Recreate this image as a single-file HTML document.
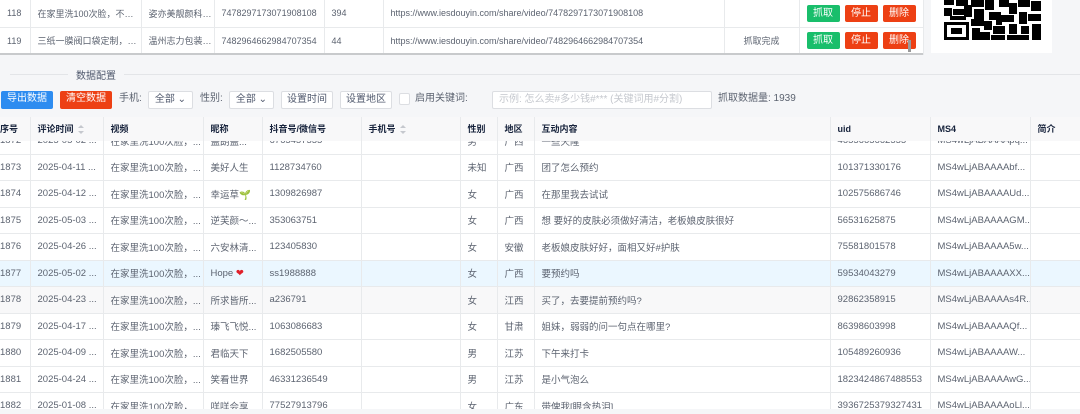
<!DOCTYPE html>
<html><head><meta charset="utf-8"><style>
*{box-sizing:border-box;margin:0;padding:0}
body{width:1080px;height:414px;overflow:hidden;background:#f5f6f8;font-family:"Liberation Sans","Noto Sans CJK SC",sans-serif;font-size:9.5px;color:#5c6370;position:relative}
.abs{position:absolute}
table{border-collapse:collapse;table-layout:fixed;position:absolute;left:0}
td,th{white-space:nowrap;overflow:hidden;padding:0 0 0 7px;text-align:left;border-right:1px solid #e8eaec;border-bottom:1px solid #e8eaec}
#top{top:0;width:923px;background:#fff;font-size:9px}
#top td{height:27px}
.btn{display:inline-block;color:#fff;height:17px;line-height:17px;width:33px;text-align:center;border-radius:2px;margin-right:5px;font-size:10px}
.g{background:#19be6b}.r{background:#ed4014}
.tb{position:absolute;top:91px;height:18px;line-height:16px;font-size:10px}
.wb{background:#fff;border:1px solid #dcdee2;border-radius:2px;color:#515a6e;text-align:center}
#head{top:117px;width:1080px;background:#f8f8f9}
#head th{height:24px;font-weight:bold;color:#17233c;font-size:9px}
#bodyw{position:absolute;top:141px;left:0;width:1080px;height:268px;overflow:hidden;background:#fff}
#body{top:-13.5px;width:1080px;background:#fff}
#body td{height:26.5px}
.hl td{background:#ebf7ff}
.st td{background:#f8f8f9}
.sort{display:inline-block;vertical-align:middle;margin-left:4px;width:7px;height:9px;position:relative}
.sort:before{content:"";position:absolute;top:0;left:0;border:3.5px solid transparent;border-bottom:3.5px solid #c5c8ce;border-top:0}
.sort:after{content:"";position:absolute;bottom:0;left:0;border:3.5px solid transparent;border-top:3.5px solid #c5c8ce;border-bottom:0}
</style></head><body>
<table id="top"><colgroup><col style="width:30px"><col style="width:111px"><col style="width:73px"><col style="width:110px"><col style="width:59px"><col style="width:341px"><col style="width:75px"><col style="width:124px"></colgroup>
<tr><td>118</td><td>在家里洗100次脸，不…</td><td>姿亦美靓颜科…</td><td>7478297173071908108</td><td>394</td><td>https://www.iesdouyin.com/share/video/7478297173071908108</td><td></td><td style="padding-left:7px"><span class="btn g">抓取</span><span class="btn r">停止</span><span class="btn r">删除</span></td></tr>
<tr><td>119</td><td>三纸一膜阀口袋定制，…</td><td>温州志力包装…</td><td>7482964662984707354</td><td>44</td><td>https://www.iesdouyin.com/share/video/7482964662984707354</td><td style="text-align:center;padding:0">抓取完成</td><td style="padding-left:7px"><span class="btn g">抓取</span><span class="btn r">停止</span><span class="btn r">删除</span></td></tr>
</table>
<div class="abs" style="left:0;top:53px;width:923px;height:2px;background:#c8cacc"></div>
<div class="abs" style="left:908px;top:40px;width:3px;height:12px;background:#999"></div>
<div class="abs" style="left:931px;top:0;width:121px;height:53px;background:#fff;overflow:hidden">
<svg width="121" height="53" viewBox="0 0 121 53"><g fill="#000">
<rect x="13" y="22" width="25" height="18"/><rect x="16" y="25" width="19" height="12" fill="#fff"/><rect x="20" y="28" width="11" height="6"/>
<rect x="13" y="0" width="10" height="5"/><rect x="25" y="0" width="12" height="6"/><rect x="13" y="8" width="8" height="8"/><rect x="22" y="9" width="11" height="6"/><rect x="33" y="5" width="8" height="12"/>
<rect x="40" y="0" width="13" height="7"/><rect x="43" y="9" width="10" height="10"/><rect x="40" y="19" width="13" height="7"/><rect x="41" y="28" width="8" height="12"/><rect x="49" y="32" width="10" height="8"/>
<rect x="54" y="0" width="9" height="10"/><rect x="58" y="12" width="12" height="8"/><rect x="53" y="21" width="8" height="9"/><rect x="62" y="26" width="12" height="8"/><rect x="60" y="35" width="14" height="5"/>
<rect x="68" y="0" width="10" height="7"/><rect x="78" y="3" width="8" height="11"/><rect x="70" y="15" width="13" height="7"/><rect x="87" y="0" width="12" height="7"/><rect x="100" y="1" width="10" height="10"/>
<rect x="88" y="12" width="8" height="12"/><rect x="97" y="14" width="13" height="7"/><rect x="78" y="24" width="8" height="10"/><rect x="90" y="26" width="8" height="8"/><rect x="101" y="24" width="9" height="16"/>
<rect x="76" y="35" width="22" height="5"/><rect x="19" y="16" width="16" height="4"/><rect x="65" y="20" width="6" height="5"/>
</g></svg></div>
<div class="abs" style="left:10px;top:74px;width:58px;height:1px;background:#e3e5e8"></div>
<div class="abs" style="left:76px;top:67px;font-size:10px;color:#515a6e">数据配置</div>
<div class="abs" style="left:124px;top:74px;width:956px;height:1px;background:#e3e5e8"></div>
<div class="tb" style="left:1px;width:52px;background:#2d8cf0;color:#fff;text-align:center;border-radius:2px">导出数据</div>
<div class="tb" style="left:60px;width:52px;background:#ed4014;color:#fff;text-align:center;border-radius:2px">清空数据</div>
<div class="tb" style="left:119px">手机:</div>
<div class="tb wb" style="left:148px;width:45px">全部 ⌄</div>
<div class="tb" style="left:200px">性别:</div>
<div class="tb wb" style="left:229px;width:45px">全部 ⌄</div>
<div class="tb wb" style="left:281px;width:52px">设置时间</div>
<div class="tb wb" style="left:340px;width:52px">设置地区</div>
<div class="tb wb" style="left:399px;top:93px;width:11px;height:12px"></div>
<div class="tb" style="left:415px">启用关键词:</div>
<div class="tb wb" style="left:492px;width:220px;text-align:left;padding-left:6px;color:#c5c8ce">示例: 怎么卖#多少钱#*** (关键词用#分割)</div>
<div class="tb" style="left:718px">抓取数据量: 1939</div>
<table id="head"><colgroup><col style="width:30px"><col style="width:73px"><col style="width:100px"><col style="width:59px"><col style="width:99px"><col style="width:99px"><col style="width:37px"><col style="width:37px"><col style="width:296px"><col style="width:100px"><col style="width:100px"><col style="width:50px"></colgroup>
<tr><th style="padding-left:0">序号</th><th>评论时间<span class="sort"></span></th><th>视频</th><th>昵称</th><th>抖音号/微信号</th><th>手机号<span class="sort"></span></th><th>性别</th><th>地区</th><th>互动内容</th><th>uid</th><th>MS4</th><th>简介</th></tr></table>
<div id="bodyw"><table id="body"><colgroup><col style="width:30px"><col style="width:73px"><col style="width:100px"><col style="width:59px"><col style="width:99px"><col style="width:99px"><col style="width:37px"><col style="width:37px"><col style="width:296px"><col style="width:100px"><col style="width:100px"><col style="width:50px"></colgroup>
<tr><td style="padding-left:0">1872</td><td>2025-05-02 ...</td><td>在家里洗100次脸，...</td><td>盖朗盖...</td><td>6765457555</td><td></td><td>男</td><td>广西</td><td>一些天隆</td><td>4655665662555</td><td>MS4wLjABAAAApq...</td><td></td></tr>
<tr><td style="padding-left:0">1873</td><td>2025-04-11 ...</td><td>在家里洗100次脸，...</td><td>美好人生</td><td>1128734760</td><td></td><td>未知</td><td>广西</td><td>团了怎么预约</td><td>101371330176</td><td>MS4wLjABAAAAbf...</td><td></td></tr>
<tr><td style="padding-left:0">1874</td><td>2025-04-12 ...</td><td>在家里洗100次脸，...</td><td>幸运草<span style="color:#7a9a1a">🌱</span></td><td>1309826987</td><td></td><td>女</td><td>广西</td><td>在那里我去试试</td><td>102575686746</td><td>MS4wLjABAAAAUd...</td><td></td></tr>
<tr><td style="padding-left:0">1875</td><td>2025-05-03 ...</td><td>在家里洗100次脸，...</td><td>逆芙颜～...</td><td>353063751</td><td></td><td>女</td><td>广西</td><td>想 要好的皮肤必须做好清洁，老板娘皮肤很好</td><td>56531625875</td><td>MS4wLjABAAAAGM...</td><td></td></tr>
<tr><td style="padding-left:0">1876</td><td>2025-04-26 ...</td><td>在家里洗100次脸，...</td><td>六安林清...</td><td>123405830</td><td></td><td>女</td><td>安徽</td><td>老板娘皮肤好好，面相又好#护肤</td><td>75581801578</td><td>MS4wLjABAAAA5w...</td><td></td></tr>
<tr class="hl"><td style="padding-left:0">1877</td><td>2025-05-02 ...</td><td>在家里洗100次脸，...</td><td>Hope <span style="color:#e0202a">❤</span></td><td>ss1988888</td><td></td><td>女</td><td>广西</td><td>要预约吗</td><td>59534043279</td><td>MS4wLjABAAAAXX...</td><td></td></tr>
<tr class="st"><td style="padding-left:0">1878</td><td>2025-04-23 ...</td><td>在家里洗100次脸，...</td><td>所求皆所...</td><td>a236791</td><td></td><td>女</td><td>江西</td><td>买了，去要提前预约吗?</td><td>92862358915</td><td>MS4wLjABAAAAs4R...</td><td></td></tr>
<tr><td style="padding-left:0">1879</td><td>2025-04-17 ...</td><td>在家里洗100次脸，...</td><td>瑧飞飞悦...</td><td>1063086683</td><td></td><td>女</td><td>甘肃</td><td>姐妹，弱弱的问一句点在哪里?</td><td>86398603998</td><td>MS4wLjABAAAAQf...</td><td></td></tr>
<tr><td style="padding-left:0">1880</td><td>2025-04-09 ...</td><td>在家里洗100次脸，...</td><td>君临天下</td><td>1682505580</td><td></td><td>男</td><td>江苏</td><td>下午来打卡</td><td>105489260936</td><td>MS4wLjABAAAAW...</td><td></td></tr>
<tr><td style="padding-left:0">1881</td><td>2025-04-24 ...</td><td>在家里洗100次脸，...</td><td>笑看世界</td><td>46331236549</td><td></td><td>男</td><td>江苏</td><td>是小气泡么</td><td>1823424867488553</td><td>MS4wLjABAAAAwG...</td><td></td></tr>
<tr><td style="padding-left:0">1882</td><td>2025-01-08 ...</td><td>在家里洗100次脸，...</td><td>咩咩会享...</td><td>77527913796</td><td></td><td>女</td><td>广东</td><td>带俾我[眼含热泪]</td><td>3936725379327431</td><td>MS4wLjABAAAAoLl...</td><td></td></tr>
</table></div>
</body></html>
